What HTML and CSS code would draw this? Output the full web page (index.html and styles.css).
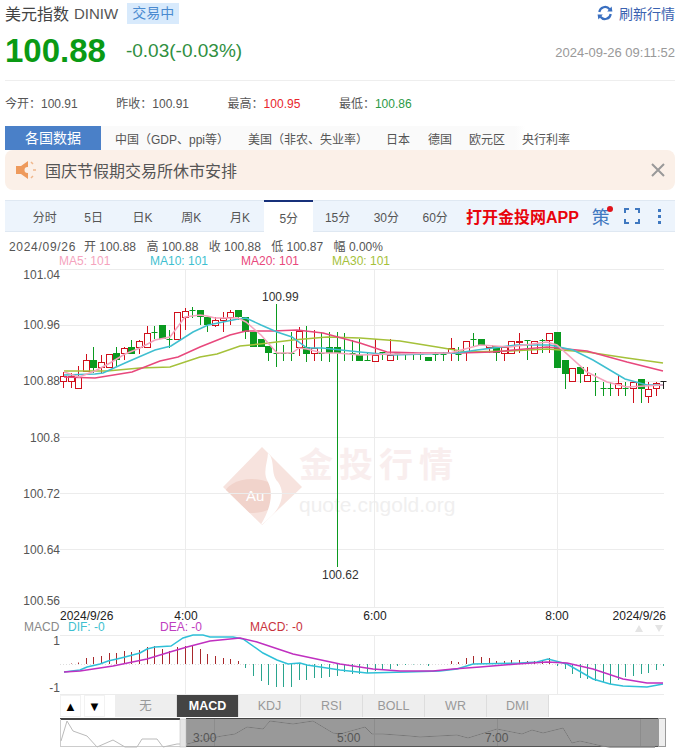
FILE: index.html
```html
<!DOCTYPE html>
<html>
    <head>
        <title>美元指数 DINIW</title>
        <link rel="stylesheet" href="styles.css">
    </head>
    <body>
        <div class="page">
            <div class="title-row">
                <span class="name">美元指数</span>
                <span class="code">DINIW</span>
                <span class="badge">交易中</span>
                <a class="refresh">
                    <svg width="16" height="16" viewBox="0 0 16 16">
                        <path d="M2.3 7 A5.8 5.8 0 0 1 12.6 4.2" fill="none" stroke="#3a6fc0" stroke-width="2.2"/>
                        <path d="M13.7 9 A5.8 5.8 0 0 1 3.4 11.8" fill="none" stroke="#3a6fc0" stroke-width="2.2"/>
                        <path d="M10.2 6.6 L15.4 6.6 L14.6 1.6 Z M0.6 9.4 L5.8 9.4 L1.4 14.4 Z" fill="#3a6fc0"/>
                    </svg>
                    刷新行情
                </a>
            </div>
            <div class="price-row">
                <span class="price">100.88</span>
                <span class="change">-0.03(-0.03%)</span>
                <span class="time">2024-09-26 09:11:52</span>
            </div>
            <div class="stats">
                <span class="stat">今开：100.91</span>
                <span class="stat">昨收：100.91</span>
                <span class="stat">最高：<em class="red">100.95</em></span>
                <span class="stat">最低：<em class="green">100.86</em></span>
            </div>
            <div class="nations">
                <span class="nations-title">各国数据</span>
                <a class="n1">中国（GDP、ppi等）</a>
                <a class="n2">美国（非农、失业率）</a>
                <a class="n3">日本</a>
                <a class="n4">德国</a>
                <a class="n5">欧元区</a>
                <a class="n6">央行利率</a>
            </div>
            <div class="notice">
                <svg class="speaker" width="22" height="22" viewBox="0 0 22 22">
                    <path d="M1 7 H6 L13 2 V20 L6 15 H1 Z" fill="#ee9a5c"/>
                    <circle cx="12.5" cy="11" r="3" fill="#fbf0e8"/>
                    <path d="M16 3 L18 5 M18 11 H21 M16 19 L18 17" stroke="#f0b78c" stroke-width="1.5"/>
                </svg>
                <span class="notice-text">国庆节假期交易所休市安排</span>
                <svg class="close" width="14" height="14" viewBox="0 0 14 14">
                    <path d="M1 1 L13 13 M13 1 L1 13" stroke="#999" stroke-width="2"/>
                </svg>
            </div>
            <div class="periods">
                <a class="period">分时</a>
                <a class="period">5日</a>
                <a class="period">日K</a>
                <a class="period">周K</a>
                <a class="period">月K</a>
                <a class="period active">5分</a>
                <a class="period">15分</a>
                <a class="period">30分</a>
                <a class="period">60分</a>
                <a class="app-link">打开金投网APP</a>
                <span class="strategy">策</span>
                <svg class="full" width="16" height="16" viewBox="0 0 16 16">
                    <path d="M1 5 V1 H5 M11 1 H15 V5 M15 11 V15 H11 M5 15 H1 V11" fill="none" stroke="#3f78c0" stroke-width="2"/>
                </svg>
                <span class="dots"><i></i><i></i><i></i></span>
            </div>
            <div class="ohlc">
                <span class="date">2024/09/26</span>
                <span>开 100.88</span>
                <span>高 100.88</span>
                <span>收 100.88</span>
                <span>低 100.87</span>
                <span>幅 0.00%</span>
            </div>
            <div class="ma-row">
                <span class="ma5">MA5: 101</span>
                <span class="ma10">MA10: 101</span>
                <span class="ma20">MA20: 101</span>
                <span class="ma30">MA30: 101</span>
            </div>
            <svg id="chart" class="chart" width="676" height="427" viewBox="0 268 676 427"></svg>
            <div class="ind-row">
                <a class="arrow">▲</a>
                <a class="arrow">▼</a>
                <div class="ind-tabs">
                    <a class="ind">无</a>
                    <a class="ind active">MACD</a>
                    <a class="ind">KDJ</a>
                    <a class="ind">RSI</a>
                    <a class="ind">BOLL</a>
                    <a class="ind">WR</a>
                    <a class="ind">DMI</a>
                </div>
            </div>
            <svg id="nav" class="nav" width="676" height="34" viewBox="0 717 676 34"></svg>
        </div>
        <script src="chart.js"></script>
    </body>
</html>
```

FILE: styles.css
```css
* {
    box-sizing: border-box;
}

html,
body {
    margin: 0;
    height: 751px;
    overflow: hidden;
    background: #fff;
}

.page {
    font-family: "Liberation Sans", "Noto Sans CJK SC", sans-serif;
    color: #555;
    font-size: 12px;
}

.title-row {
    display: flex;
    align-items: center;
    height: 26px;
    padding: 0 1px 0 5px;
}

.name {
    font-size: 16px;
    color: #444;
}

.code {
    font-size: 15px;
    color: #555;
    margin-left: 5px;
}

.badge {
    margin-left: 9px;
    width: 52px;
    height: 21px;
    line-height: 21px;
    text-align: center;
    background: #d8eafc;
    color: #4a8ad0;
    font-size: 14px;
}

.refresh {
    margin-left: auto;
    display: flex;
    align-items: center;
    gap: 6px;
    font-size: 14px;
    color: #3a62b0;
}

.price-row {
    display: flex;
    align-items: center;
    height: 55px;
    margin: 0 1px 0 5px;
    padding: 0 0 4px 0;
    border-bottom: 1px solid #eee;
}

.price {
    font-size: 33px;
    font-weight: bold;
    color: #0a9a14;
}

.change {
    margin-left: 20px;
    font-size: 19px;
    color: #2f8f3f;
}

.time {
    margin-left: auto;
    margin-top: 3px;
    font-size: 13px;
    color: #999;
}

.stats {
    display: flex;
    height: 45px;
    padding: 15px 0 0 5px;
}

.stat {
    width: 111.3px;
    line-height: 16px;
}

em {
    font-style: normal;
}

.red {
    color: #e8262c;
}

.green {
    color: #2c9a46;
}

.nations {
    display: flex;
    align-items: center;
    height: 24px;
    margin-left: 5px;
    background: linear-gradient(90deg, #fafafa, #fafafa 510px, #fff 520px);
}

.nations-title {
    width: 96px;
    height: 24px;
    line-height: 24px;
    text-align: center;
    background: #4a80c8;
    color: #fff;
    font-size: 14px;
}

.n1 {
    margin-left: 14px;
}

.n2 {
    margin-left: 19px;
}

.n3 {
    margin-left: 18px;
}

.n4 {
    margin-left: 18px;
}

.n5 {
    margin-left: 17px;
}

.n6 {
    margin-left: 17px;
}

.notice {
    display: flex;
    align-items: center;
    height: 40px;
    margin: 0 1px 10px 5px;
    padding: 0 10px;
    background: #fbf0e8;
    border-radius: 8px;
}

.speaker {
    flex: none;
}

.notice-text {
    margin-left: 8px;
    font-size: 16px;
    color: #555;
}

.close {
    margin-left: auto;
}

.periods {
    display: flex;
    align-items: center;
    height: 32px;
    margin: 0 1px 0 5px;
    padding-left: 15.4px;
    background: #edf4fc;
    border: 1px solid #dfe8f2;
    border-width: 1px 0;
}

.period {
    width: 48.8px;
    text-align: center;
    height: 30px;
    line-height: 34px;
    color: #555;
}

.period.active {
    height: 32px;
    line-height: 34px;
    background: #fff;
    border-top: 2px solid #17307a;
    align-self: flex-start;
    margin-top: -1px;
}

.app-link {
    margin-left: 6.4px;
    font-size: 16px;
    font-weight: bold;
    color: #e8040c;
    white-space: nowrap;
}

.strategy {
    position: relative;
    margin-left: 13px;
    font-size: 18px;
    color: #3f78c0;
}

.strategy::after {
    content: "";
    position: absolute;
    top: 3px;
    right: -3px;
    width: 6px;
    height: 6px;
    border-radius: 50%;
    background: #e0141c;
}

.full {
    margin-left: 14px;
}

.dots {
    display: flex;
    flex-direction: column;
    gap: 3px;
    margin-left: 18px;
}

.dots i {
    display: block;
    width: 3px;
    height: 3px;
    background: #3f78c0;
}

.ohlc {
    display: flex;
    height: 19px;
    padding: 6px 0 0 9px;
    line-height: 18px;
    white-space: nowrap;
}

.ohlc span {
    width: 62.4px;
}

.ohlc .date {
    width: 75px;
    letter-spacing: 0.7px;
}

.ma-row {
    display: flex;
    height: 17px;
    padding: 4px 0 0 59px;
    line-height: 13px;
}

.ma-row span {
    width: 91px;
}

.ma5 {
    color: #f5a3bd;
}

.ma10 {
    color: #3fbfd0;
}

.ma20 {
    color: #e8487c;
}

.ma30 {
    color: #a5c13a;
}

.chart,
.nav {
    display: block;
}

.chart text,
.nav text {
    font-family: "Liberation Sans", "Noto Sans CJK SC", sans-serif;
}

.ind-row {
    display: flex;
    height: 23px;
    padding-left: 60px;
    background: #fff;
}

.arrow {
    width: 21px;
    height: 22px;
    margin-right: 3px;
    line-height: 22px;
    text-align: center;
    font-size: 13px;
    color: #000;
    background: #fff;
    border: 1px solid #f2f2f2;
}

.ind-tabs {
    display: flex;
    margin-left: 7px;
}

.ind {
    width: 62px;
    height: 22px;
    line-height: 22px;
    text-align: center;
    font-size: 12.5px;
    color: #999;
    background: #eee;
    border-right: 1px solid #ddd;
}

.ind.active {
    background: #444;
    color: #fff;
    font-weight: bold;
}
```

FILE: chart.js
```js
const NS = 'http://www.w3.org/2000/svg';
const chart = document.getElementById('chart');
const nav = document.getElementById('nav');

// top, bottom, wick top, wick bottom, colour (pixel rows of the page)
const candles = [
    [376, 381, 372, 388, 'r'], [376, 381, 373, 388, 'r'], [377, 388, 366, 388, 'r'], [360, 371, 354, 372, 'r'],
    [360, 368, 347, 373, 'g'], [362, 367, 355, 373, 'r'], [354, 367, 354, 367, 'r'], [353, 360, 347, 367, 'g'],
    [348, 353, 347, 360, 'r'], [347, 354, 340, 354, 'g'], [341, 347, 340, 354, 'r'], [333, 347, 326, 348, 'r'],
    [332, 333, 326, 339, 'g'], [325, 339, 325, 339, 'g'], [339, 340, 330, 348, 'g'], [312, 339, 312, 339, 'r'],
    [311, 317, 308, 330, 'r'], [310, 311, 307, 318, 'g'], [310, 317, 310, 325, 'g'], [317, 325, 317, 332, 'g'],
    [320, 325, 317, 327, 'r'], [318, 320, 312, 332, 'r'], [312, 317, 310, 325, 'r'], [310, 317, 310, 320, 'g'],
    [317, 332, 317, 339, 'g'], [332, 347, 332, 347, 'g'], [339, 347, 339, 347, 'g'], [346, 353, 346, 361, 'g'],
    [353, 354, 304, 367, 'g'], [353, 354, 345, 361, 'g'], [353, 354, 332, 361, 'g'], [331, 347, 327, 356, 'r'],
    [347, 354, 326, 362, 'g'], [348, 353, 330, 361, 'r'], [353, 354, 332, 361, 'g'], [347, 353, 332, 362, 'g'],
    [347, 353, 332, 567, 'g'], [353, 354, 333, 361, 'g'], [353, 354, 340, 361, 'g'], [355, 361, 339, 361, 'g'],
    [360, 361, 352, 361, 'g'], [355, 361, 339, 361, 'r'], [352, 353, 352, 360, 'g'], [355, 360, 339, 361, 'r'],
    [353, 354, 352, 360, 'g'], [354, 355, 352, 360, 'g'], [354, 355, 352, 360, 'g'], [354, 355, 352, 360, 'g'],
    [357, 361, 357, 361, 'g'], [354, 355, 352, 361, 'g'], [354, 355, 352, 361, 'g'], [348, 353, 338, 361, 'r'],
    [354, 355, 347, 361, 'g'], [341, 352, 341, 361, 'r'], [339, 340, 333, 346, 'g'], [339, 346, 339, 346, 'g'],
    [345, 347, 345, 353, 'r'], [346, 353, 346, 361, 'g'], [347, 353, 347, 361, 'r'], [341, 353, 341, 353, 'r'],
    [341, 342, 333, 353, 'r'], [340, 341, 340, 360, 'g'], [341, 353, 341, 353, 'r'], [340, 341, 339, 353, 'g'],
    [333, 340, 333, 353, 'r'], [332, 368, 332, 368, 'g'], [360, 374, 360, 389, 'g'], [368, 381, 368, 381, 'r'],
    [367, 374, 367, 383, 'g'], [375, 381, 367, 381, 'r'], [381, 382, 373, 396, 'g'], [388, 389, 382, 396, 'g'],
    [388, 389, 382, 396, 'g'], [383, 388, 375, 396, 'r'], [388, 389, 382, 396, 'g'], [382, 388, 382, 403, 'r'],
    [379, 389, 379, 403, 'g'], [389, 396, 382, 403, 'r'], [383, 388, 382, 396, 'r'], [381, 382, 381, 389, 'k']
];

const lines = [
    ['#a5c13a', '64,371 107,371 140,368 170,367 200,357 217,354 240,346 260,344 293,340 327,337 360,338 400,341 437,347 467,352 510,351 547,349 587,352 627,358 663,363'],
    ['#e8487c', '64,377 95,378 132,372 160,361 178,357 200,347 230,335 246,331 273,331 297,330 323,333 360,343 387,352 420,353 460,353 493,352 547,347 587,351 627,362 663,371'],
    ['#3fbfd0', '64,375 95,374 103,373 125,363 155,350 171,346 193,332 208,325 238,319 246,318 261,325 277,332 292,337 307,348 322,348 360,352 393,355 457,353 477,350 517,345 550,345 573,350 593,360 625,379 647,385 663,385'],
    ['#f5a3bd', '64,372 79,377 95,371 110,363 125,354 140,348 155,340 170,337 185,317 200,315 207,316 215,318 238,318 246,322 261,335 277,353 292,353 299,348 307,349 322,353 337,353 360,355 393,354 450,353 480,345 510,347 547,342 557,345 587,372 607,382 627,387 663,385']
];

// histogram height per candle, up is positive
const macd = [
    0, 0.5, 1.5, 6, 7, 8, 11, 11, 13, 12, 14, 17, 18, 15, 13, 17, 18, 19, 15, 10,
    8, 6, 5, 3, -4, -12, -17, -21, -23, -23, -23, -16, -16, -14, -14, -13, -12, -8, -10, -10,
    -9, -7, -6, -5, -2, -1, -0.5, -0.5, -2, 0, 0, 3, 2, 6, 8, 7, 6, 3, 3, 4,
    4, 3, 3, 4, 6, -2, -5, -10, -14, -15, -17, -18, -20, -16, -13, -12, -10, -9, -6, -2
];

const dif = '64,672 80,670 87,667 100,664 108,661 117,659 125,657 140,653 147,649 155,647 171,646 183,638 193,635 203,635 210,637 233,637 243,639 263,653 277,660 288,664 300,663 307,665 340,670 367,673 407,672 440,671 457,669 473,664 520,663 537,662 548,659 567,664 593,679 610,684 623,686 647,687 663,684';
const dea = '64,672 80,671 113,666 147,659 170,652 187,647 210,641 240,638 257,642 293,654 340,664 373,669 400,671 433,671 453,669 480,667 517,664 547,662 567,663 593,669 623,679 647,683 663,683';
const navLine = '61,740 67,720 73,730 87,735 97,746 113,739 125,746 137,746 142,738 157,738 163,746 177,743 187,743 207,738 222,735 235,733 247,726 263,728 270,720 293,723 313,720 333,732 340,733 365,726 372,733 383,733 410,735 420,736 457,734 468,737 497,728 522,733 532,729 543,732 563,727 572,742 580,740 602,745 610,746 655,746';

function add(parent, tag, attrs, text) {
    const el = document.createElementNS(NS, tag);
    for (const key in attrs) el.setAttribute(key, attrs[key]);
    if (text) el.textContent = text;
    parent.appendChild(el);
    return el;
}

function label(x, y, text, fill, anchor) {
    add(chart, 'text', { x: x, y: y, fill: fill, 'font-size': 12, 'text-anchor': anchor || 'start' }, text);
}

function crisp(n) {
    return Math.floor(n) + 0.5;
}

// watermark
const clip = add(chart, 'clipPath', { id: 'diamond' });
add(clip, 'path', { d: 'M262 447 L302 487 L262 525 L223 487 Z' });
const logo = add(chart, 'g', { 'clip-path': 'url(#diamond)' });
add(logo, 'rect', { x: 220, y: 445, width: 85, height: 82, fill: '#f7e3de' });
add(logo, 'ellipse', { cx: 252, cy: 496, rx: 28, ry: 17, fill: '#f1d3cb' });
add(logo, 'path', { d: 'M268 452 C276 462 270 474 278 482 C288 496 278 514 260 526 C270 510 274 494 268 482 C262 472 268 462 268 452 Z', fill: '#fff' });
add(chart, 'text', { x: 246, y: 501, fill: '#fff', 'font-size': 15 }, 'Au');
add(chart, 'text', { x: 299, y: 477, fill: '#f9eeee', 'font-size': 34, 'font-weight': 'bold', 'letter-spacing': 6 }, '金投行情');
add(chart, 'text', { x: 299, y: 512, fill: '#f0efef', 'font-size': 21 }, 'quote.cngold.org');

// grid
[269, 325, 381, 437, 493, 549, 607, 635, 694].forEach((y) => {
    add(chart, 'line', { x1: 60, x2: 664, y1: y + 0.5, y2: y + 0.5, stroke: '#ececec' });
});
[185, 374, 557].forEach((x) => {
    add(chart, 'line', { x1: x + 0.5, x2: x + 0.5, y1: 269, y2: 607, stroke: '#ececec' });
    add(chart, 'line', { x1: x + 0.5, x2: x + 0.5, y1: 635, y2: 694, stroke: '#ececec' });
});

[[279, '101.04'], [329, '100.96'], [385, '100.88'], [442, '100.8'], [498, '100.72'], [554, '100.64'], [605, '100.56']].forEach((row) => {
    label(60, row[0], row[1], '#555', 'end');
});

// candles
const colours = { r: '#d0101c', g: '#0a9a1f', k: '#222' };
candles.forEach((c, i) => {
    const x = 63.5 + i * 7.6;
    const mid = crisp(x);
    const colour = colours[c[4]];
    add(chart, 'line', { x1: mid, x2: mid, y1: c[2], y2: c[3], stroke: colour });
    if (c[4] == 'r') {
        add(chart, 'rect', { x: mid - 3, y: crisp(c[0]), width: 6, height: c[1] - c[0], fill: '#fff', stroke: colour });
    } else if (c[1] - c[0] > 1) {
        add(chart, 'rect', { x: mid - 3.5, y: c[0], width: 7, height: c[1] - c[0], fill: colour });
    } else {
        add(chart, 'line', { x1: mid - 3, x2: mid + 3, y1: c[0] + 0.5, y2: c[0] + 0.5, stroke: colour });
    }
});

lines.forEach((l) => {
    add(chart, 'polyline', { points: l[1], fill: 'none', stroke: l[0], 'stroke-width': 1.5 });
});

label(262, 301, '100.99', '#333');
label(322, 579, '100.62', '#333');

// time axis and MACD legend
label(60, 620, '2024/9/26', '#222');
label(186, 620, '4:00', '#222', 'middle');
label(375, 620, '6:00', '#222', 'middle');
label(557, 620, '8:00', '#222', 'middle');
label(666, 620, '2024/9/26', '#222', 'end');
label(24, 631, 'MACD', '#888');
label(68, 631, 'DIF: -0', '#3fbfd0');
label(160, 631, 'DEA: -0', '#c03ec0');
label(250, 631, 'MACD: -0', '#c8323c');
add(chart, 'path', { d: 'M635 632 L643 632 L639 625 Z M655 625 L663 625 L659 632 Z', fill: '#e4e4e4' });
label(60, 645, '1', '#555', 'end');
label(60, 692, '-1', '#555', 'end');

// MACD panel
add(chart, 'line', { x1: 60, x2: 664, y1: 664.5, y2: 664.5, stroke: '#ddd', 'stroke-dasharray': '1 2' });
macd.forEach((h, i) => {
    if (h == 0) return;
    const x = crisp(63.5 + i * 7.6);
    add(chart, 'line', { x1: x, x2: x, y1: 664, y2: 664 - h, stroke: h > 0 ? '#a8282c' : '#2aa58e' });
});
add(chart, 'polyline', { points: dif, fill: 'none', stroke: '#2fc0d8', 'stroke-width': 1.5 });
add(chart, 'polyline', { points: dea, fill: 'none', stroke: '#c030c0', 'stroke-width': 1.5 });

// navigator
add(nav, 'rect', { x: 60, y: 717, width: 120, height: 2, fill: '#444' });
add(nav, 'rect', { x: 186, y: 718, width: 472, height: 27, fill: '#999' });
add(nav, 'line', { x1: 60, x2: 666, y1: 745.5, y2: 745.5, stroke: '#ccc' });
add(nav, 'line', { x1: 186, x2: 658, y1: 717.5, y2: 717.5, stroke: '#444' });
add(nav, 'line', { x1: 186, x2: 658, y1: 745.5, y2: 745.5, stroke: '#555' });
add(nav, 'line', { x1: 60.5, x2: 60.5, y1: 718, y2: 746, stroke: '#ccc' });
add(nav, 'polyline', { points: navLine, fill: 'none', stroke: '#bbb' });
add(nav, 'polyline', { points: navLine.split(' ').filter((p) => parseInt(p) >= 187).join(' '), fill: 'none', stroke: '#777' });
[214, 374, 497, 640].forEach((x) => {
    add(nav, 'line', { x1: x + 0.5, x2: x + 0.5, y1: 718, y2: 745, stroke: '#8c8c8c' });
});
[[193, '3:00'], [337, '5:00'], [485, '7:00']].forEach((t) => {
    add(nav, 'text', { x: t[0], y: 741, fill: '#555', 'font-size': 12 }, t[1]);
});
add(nav, 'rect', { x: 180, y: 718, width: 6, height: 28, fill: '#e6e6e6', stroke: '#bbb', 'stroke-width': 0.5 });
add(nav, 'rect', { x: 658.5, y: 717.5, width: 7, height: 28, fill: '#eee', stroke: '#999' });
```
